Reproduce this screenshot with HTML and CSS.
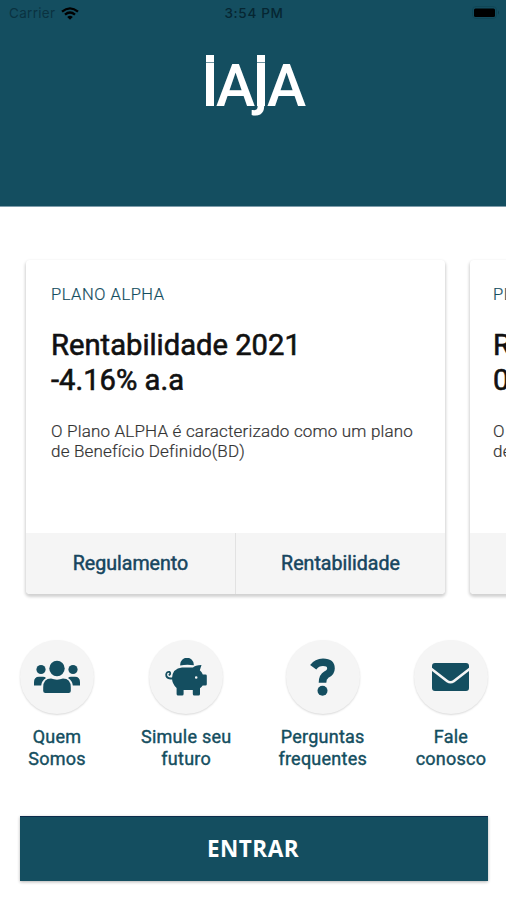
FILE: index.html
```html
<!DOCTYPE html>
<html lang="pt-BR">
<head>
<meta charset="utf-8">
<meta name="viewport" content="width=device-width, initial-scale=1">
<title>IAJA</title>
<link rel="stylesheet" href="styles.css">
</head>
<body>
<header class="header">
  <div class="status">
    <div class="carrier"><span>Carrier</span>
      <svg class="wifi" viewBox="0 0 18 13"><path d="M1 4.7Q9-2 17 4.7M4 7.7Q9 3.4 14 7.7" fill="none" stroke="currentColor" stroke-width="2.3"/><path d="M9 12.7 6.2 10Q9 7.7 11.8 10Z" fill="currentColor"/></svg>
    </div>
    <span class="time">3:54 PM</span>
    <svg class="battery" viewBox="0 0 28 14"><rect x=".5" y=".5" width="24" height="12" rx="3.5" fill="none" stroke="#104656"/><rect x="2" y="2.5" width="21" height="8.5" rx="1.5" fill="#000"/><path d="M26 4.5Q28 6.5 26 8.5Z" fill="#0d3d4d"/></svg>
  </div>
  <div class="logo"><span class="dotted">i</span><span>A</span><span class="dotted jay">j</span><span>A</span></div>
</header>
<main>
  <section class="plans">
    <article class="card">
      <div class="card-body">
        <p class="plan">PLANO ALPHA</p>
        <h2>Rentabilidade 2021<br>-4.16% a.a</h2>
        <p class="desc">O Plano ALPHA é caracterizado como um plano<br>de Benefício Definido(BD)</p>
      </div>
      <div class="card-actions"><a>Regulamento</a><a>Rentabilidade</a></div>
    </article>
    <article class="card next">
      <div class="card-body">
        <p class="plan">PL</p>
        <h2>R<br>0</h2>
        <p class="desc">O<br>de</p>
      </div>
      <div class="card-actions"><a></a><a></a></div>
    </article>
  </section>
  <nav class="shortcuts">
    <a class="shortcut"><span class="circle"><svg class="people" viewBox="0 0 46 34"><circle cx="23" cy="8.5" r="7.7"/><circle cx="7" cy="9.5" r="4.6"/><circle cx="39" cy="9.5" r="4.6"/><path d="M9.2 31v-3.4Q9.2 18.6 17 18.6q6 2.2 12 0 7.8 0 7.8 9V31q0 2-2.2 2H11.4q-2.2 0-2.2-2ZM0 25.5v-3.2Q0 16.8 5 16.8h4q2 0 3 1.2-4.4 2.5-4.8 7.5ZM46 25.5v-3.2q0-5.5-5-5.5h-4q-2 0-3 1.2 4.4 2.5 4.8 7.5Z"/></svg></span><span class="label">Quem<br>Somos</span></a>
    <a class="shortcut"><span class="circle"><svg class="pig" viewBox="0 0 42 38"><path d="M15.2 6.5a6.8 6.8 0 0 1 13.6 0v.8q-6.8-1.3-13.6.2Z"/><path fill-rule="evenodd" d="M17 9.5h11q2-2.2 8.5-2.5l-1.7 5.2q2.2 1.8 3 4.3h2.7q1.3 0 1.3 1.3v8.4q0 1.3-1.3 1.3h-2.8q-1.2 1.7-2.7 2.7V36q0 1.5-1.5 1.5h-4.2q-1.5 0-1.5-1.5v-4H18.6v4q0 1.5-1.5 1.5h-4q-1.5 0-1.5-1.5v-6Q7 25.8 7 20 7.5 10.5 17 9.5ZM31.2 18.2a1.3 1.3 0 1 0 0 2.6 1.3 1.3 0 0 0 0-2.6Z"/><path d="M8 20.5H5.5Q1 20 1.2 16.5q.3-3 3.3-2.6 1.8 2.1-.8 3.3" fill="none" stroke="currentColor" stroke-width="1.8"/></svg></span><span class="label">Simule seu<br>futuro</span></a>
    <a class="shortcut"><span class="circle"><svg class="question" viewBox="0 0 26 38"><path d="M3.2 9.2Q6.8 4.2 13 4.2q8 0 8 6.2 0 4-4.6 6.2-3.9 2.2-3.9 8.2" fill="none" stroke="currentColor" stroke-width="7.6"/><circle cx="12.5" cy="32.8" r="5"/></svg></span><span class="label">Perguntas<br>frequentes</span></a>
    <a class="shortcut"><span class="circle"><svg class="mail" viewBox="0 0 37 28"><path d="M3 0h31Q37 0 37 3v1.8L21.5 16.8q-3 2.4-6 0L0 4.8V3Q0 0 3 0Z"/><path d="M0 8 14.5 19.2q4 2.8 8 0L37 8v17q0 3-3 3H3q-3 0-3-3Z"/></svg></span><span class="label">Fale<br>conosco</span></a>
  </nav>
  <button class="enter">ENTRAR</button>
</main>
</body>
</html>
```
FILE: styles.css
```css
* { box-sizing: border-box; }
body { margin: 0; height: 900px; overflow: hidden; background: #fff; font-family: Roboto, sans-serif; color: #144e60; }
p, h2 { margin: 0; }
svg { display: block; fill: currentColor; }
.header { height: 207px; background: #144e60; border-bottom: 1px solid #7f9dab; }
.status { display: grid; grid-template-columns: 1fr auto 1fr; align-items: center; height: 26px; padding: 0 6px 0 9px; color: #062632; font: 13.5px/26px Inter, sans-serif; }
.carrier { display: flex; align-items: center; gap: 6px; letter-spacing: .3px; color: #0a3240; }
.wifi { width: 18px; height: 13px; color: #000; }
.time { margin-right: 1px; font-size: 13.5px; font-weight: 500; letter-spacing: .7px; }
.battery { width: 28px; height: 14px; justify-self: end; }
.logo { display: flex; width: 101px; margin: 30px 0 0 205px; color: #fff; font-size: 59px; font-weight: 500; line-height: 59px; }
.logo span { width: 37px; }
.logo .dotted { position: relative; width: 11px; text-indent: -2px; font-size: 55px; }
.logo .jay { width: 14px; text-indent: 1px; }
.dotted::before, .dotted::after { content: ""; position: absolute; left: 1px; width: 8px; background: #fff; }
.dotted::before { top: -1px; height: 7px; }
.dotted::after { top: 7px; height: 43px; box-shadow: 0 -1px #6f93a0; }
.jay::before, .jay::after { left: 4px; }
.plans { display: flex; gap: 25px; padding: 53px 0 0 26px; overflow: hidden; height: 403px; }
.card { flex: 0 0 419px; height: 334px; display: flex; flex-direction: column; border-radius: 4px; background: #fff; box-shadow: 0 2px 3px 1px rgba(0,0,0,.18); overflow: hidden; }
.card-body { flex: 1; padding: 25px 25px 0; }
.next .card-body { padding-left: 23px; }
.plan { font-size: 16.5px; line-height: 20px; font-weight: 300; letter-spacing: .55px; -webkit-text-stroke: .2px currentColor; }
h2 { margin-top: 23px; font-size: 29.2px; line-height: 34.5px; font-weight: 400; color: #111; white-space: nowrap; -webkit-text-stroke: .6px currentColor; }
.desc { margin-top: 25px; font-size: 17px; line-height: 19.5px; font-weight: 300; letter-spacing: .18px; color: #333; white-space: nowrap; -webkit-text-stroke: .2px currentColor; }
.card-actions { display: flex; height: 61px; background: #f5f5f5; }
.card-actions a { flex: 1; text-align: center; font-size: 19.6px; line-height: 61px; font-weight: 400; color: #174660; -webkit-text-stroke: .5px currentColor; }
.card-actions a + a { border-left: 1px solid #e2e2e2; }
.shortcuts { display: flex; justify-content: space-between; padding: 30px 18px 0 20px; }
.shortcut { display: flex; flex-direction: column; align-items: center; }
.circle { display: flex; align-items: center; justify-content: center; width: 74px; height: 74px; border-radius: 50%; background: #f5f5f5; box-shadow: 0 1px 2px rgba(0,0,0,.15); }
.label { margin-top: 12px; text-align: center; font-size: 18px; line-height: 22px; font-weight: 400; letter-spacing: .25px; white-space: nowrap; -webkit-text-stroke: .4px currentColor; }
.people { width: 46px; height: 34px; }
.pig { width: 42px; height: 38px; }
.question { width: 26px; height: 38px; }
.mail { width: 37px; height: 28px; margin-bottom: 1px; }
.enter { display: block; width: 468px; height: 65px; margin: 46px 0 0 20px; padding: 0; border: 0; border-top: 1px solid #0b2c4c; background: #144e60; color: #fff; font: 700 22.5px/64px "Open Sans", sans-serif; letter-spacing: .5px; text-indent: -2px; box-shadow: 0 1px 3px rgba(0,0,0,.3); }
```
